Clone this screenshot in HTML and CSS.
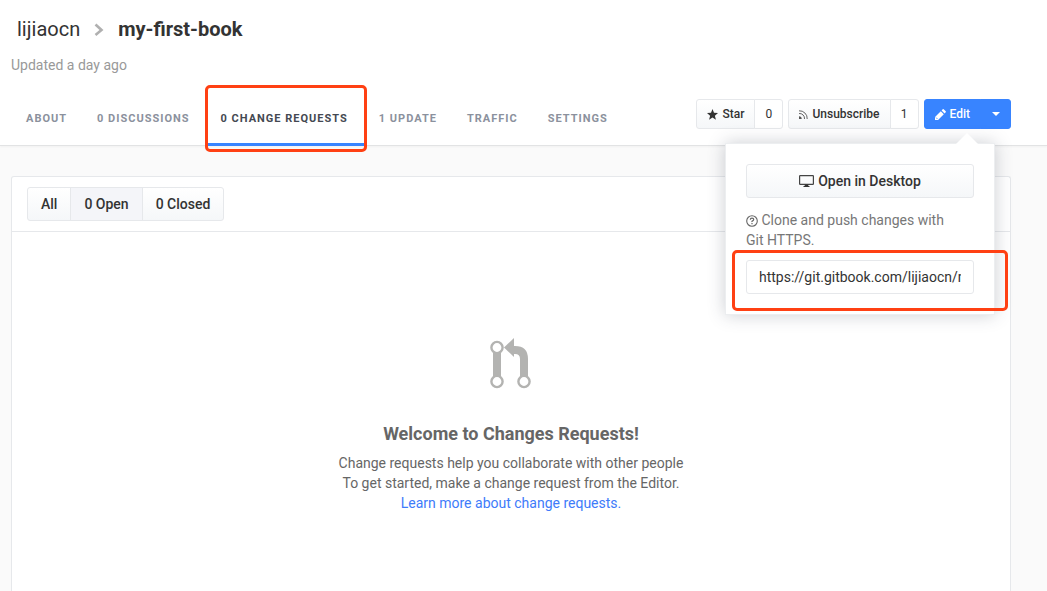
FILE: index.html
```html
<!DOCTYPE html>
<html lang="en">
<head>
<meta charset="utf-8">
<title>lijiaocn / my-first-book</title>
<link rel="stylesheet" href="styles.css">
</head>
<body>
<header class="header">
  <h1 class="title">
    <a class="owner" href="#">lijiaocn</a>
    <svg class="chevron" width="10" height="14" viewBox="0 0 10 14"><path d="M1.500 2.500 7.500 8l-6 5" fill="none" stroke="#b0b0b0" stroke-width="2.600"/></svg>
    <a class="book" href="#">my-first-book</a>
  </h1>
  <p class="updated">Updated a day ago</p>
  <div class="bar">
    <nav class="tabs">
      <a class="tab" href="#">ABOUT</a>
      <a class="tab" href="#">0 DISCUSSIONS</a>
      <a class="tab active" href="#">0 CHANGE REQUESTS<span class="mark mark-tab"></span></a>
      <a class="tab" href="#">1 UPDATE</a>
      <a class="tab" href="#">TRAFFIC</a>
      <a class="tab" href="#">SETTINGS</a>
    </nav>
    <div class="actions">
      <div class="group">
        <button class="btn small star"><svg width="11" height="11" viewBox="0 0 11 11"><path d="M5.500 0 7 3.800l4 .3-3.100 2.600 1 4L5.500 8.500 2.100 10.700l1-4L0 4.100l4-.3z" fill="#333"/></svg>Star</button>
        <button class="btn small count">0</button>
      </div>
      <div class="group">
        <button class="btn small"><svg width="9" height="9" viewBox="0 0 9 9"><g fill="none" stroke="#555" stroke-width=".9"><path d="M0 .8A7.700 7.700 0 0 1 8.200 9M0 3.500A5 5 0 0 1 5.500 9"/></g><path d="M0 9V6.300A2.700 2.700 0 0 1 2.700 9z" fill="#555"/></svg>Unsubscribe</button>
        <button class="btn small count">1</button>
      </div>
      <div class="group edit">
        <button class="btn small primary"><svg width="11" height="11" viewBox="0 0 11 11"><path d="M0 11V8l5.800-5.800 3 3L3 11zM6.600 1.400 7.700.3q.5-.5 1 0l2 2q.5.5 0 1L9.600 4.400z" fill="#fff"/><path d="M1 8.500 2.500 10" stroke="#3884ff" stroke-width=".8"/></svg>Edit</button>
        <button class="btn small primary caret" aria-label="More edit options"><svg width="8" height="4" viewBox="0 0 8 4"><path d="M0 0h8L4 4z" fill="#fff"/></svg></button>
        <div class="menu">
          <button class="btn desktop"><svg width="15" height="12" viewBox="0 0 15 12"><rect x=".6" y=".6" width="13.800" height="8.800" rx=".6" fill="none" stroke="#444" stroke-width="1.200"/><path d="M6 9.500h3l.5 1.500h1v1h-6v-1h1z" fill="#333"/></svg>Open in Desktop</button>
          <label class="clone" for="git-url"><svg width="12" height="12" viewBox="0 0 12 12"><circle cx="6" cy="6" r="5.300" fill="none" stroke="#666" stroke-width="1.100"/><path d="M4.300 4.700q0-1.600 1.700-1.600t1.700 1.500q0 .8-1 1.300T6 7" fill="none" stroke="#666" stroke-width="1.200"/><path d="M5.400 8h1.200v1.200H5.400z" fill="#666"/></svg> Clone and push changes with Git HTTPS.</label>
          <input class="url" id="git-url" type="text" readonly value="https://git.gitbook.com/lijiaocn/my-first-book.git">
          <span class="mark mark-url"></span>
        </div>
      </div>
    </div>
  </div>
</header>
<main class="content">
  <section class="panel">
    <div class="filters">
      <div class="group">
        <button class="btn">All</button>
        <button class="btn selected">0 Open</button>
        <button class="btn">0 Closed</button>
      </div>
    </div>
    <div class="empty">
      <svg class="pull" width="42" height="51" viewBox="0 0 42 51"><g fill="none" stroke="#b3b3b1"><path d="M7 15v24M34 39V21q0-9-9-9h-3" stroke-width="8"/><g stroke-width="2.400"><circle cx="7" cy="9.500" r="5.600" fill="#fff"/><circle cx="7" cy="43.500" r="5.600" fill="#fff"/><circle cx="34" cy="43.500" r="5.600" fill="#fff"/></g></g><path d="M14 9.500 24 0v19z" fill="#b3b3b1"/></svg>
      <h2 class="welcome">Welcome to Changes Requests!</h2>
      <p class="lead">Change requests help you collaborate with other people<br>To get started, make a change request from the Editor.<br><a class="learn" href="#">Learn more about change requests.</a></p>
    </div>
  </section>
</main>
</body>
</html>
```
FILE: styles.css
```css
* { box-sizing: border-box; }
body {
  margin: 0;
  min-height: 100vh;
  display: flex;
  flex-direction: column;
  background: #fafafa;
  color: #333;
  font: 14px/20px Roboto, "Liberation Sans", sans-serif;
}
a { color: inherit; text-decoration: none; }
h1, h2, p { margin: 0; }
.header {
  padding: 16px 36px 0 11px;
  background: #fff;
  border-bottom: 1px solid #e2e3e4;
  box-shadow: 0 1px 2px rgba(0, 0, 0, .04);
}
.title {
  display: flex;
  align-items: center;
  gap: 14px;
  padding-left: 6px;
  font-size: 20px;
  line-height: 26px;
  font-weight: 400;
}
.book { font-weight: 700; }
.updated { margin-top: 13px; color: #999; }
.bar { display: flex; justify-content: space-between; margin-top: 15px; }
.tabs { display: flex; margin-bottom: -1px; }
.tab {
  position: relative;
  padding: 4px 15px 0;
  border-bottom: 3px solid transparent;
  color: #8b919d;
  font-size: 11px;
  font-weight: 700;
  line-height: 49px;
  letter-spacing: 1px;
  white-space: nowrap;
}
.active { padding: 4px 16px 0; border-color: #3884ff; color: #444952; }
.mark {
  position: absolute;
  border: 3px solid #ff4013;
  border-radius: 5px;
  pointer-events: none;
}
.mark-tab { top: -5px; right: -3px; bottom: -9px; left: 0; }
.actions { display: flex; gap: 5px; align-self: flex-start; margin-top: 9px; }
.group { display: flex; }
.btn {
  display: flex;
  align-items: center;
  justify-content: center;
  gap: 4px;
  height: 34px;
  padding: 0 13px;
  border: 1px solid #e6e8eb;
  border-radius: 3px;
  background: linear-gradient(#fff, #f5f7f9);
  color: #333;
  font: 500 14px/20px Roboto, "Liberation Sans", sans-serif;
  white-space: nowrap;
}
.group .btn + .btn { margin-left: -1px; border-top-left-radius: 0; border-bottom-left-radius: 0; }
.group .btn:not(:last-of-type) { border-top-right-radius: 0; border-bottom-right-radius: 0; }
.small { height: 30px; padding: 0 10px; font-size: 12px; }
.count { width: 29px; padding: 0; background: #fff; font-weight: 400; }
.group .selected { background: #f4f5f9; }
.edit { position: relative; }
.primary { border-color: #3884ff; background: #3884ff; color: #fff; }
.caret { width: 31px; }
.menu {
  position: absolute;
  z-index: 2;
  top: 44px;
  right: 16px;
  width: 270px;
  padding: 20px;
  border: 1px solid #eceef0;
  background: #fff;
  box-shadow: 0 0 16px rgba(50, 60, 80, .25);
}
.menu::before {
  content: "";
  position: absolute;
  top: -11px;
  right: 16px;
  border: 11px solid transparent;
  border-top: 0;
  border-bottom-color: #fff;
}
.menu .desktop { width: 100%; border-radius: 3px; }
.clone { display: block; margin: 12px 0 10px; padding-right: 16px; color: #777; }
.clone svg { vertical-align: -2px; }
.url {
  display: block;
  width: 100%;
  height: 34px;
  padding: 0 12px;
  border: 1px solid #e6e8eb;
  border-radius: 3px;
  color: #333;
  font: 14px/20px Roboto, "Liberation Sans", sans-serif;
}
.mark-url { right: -14px; bottom: 3px; left: 6px; height: 61px; }
.content { flex: 1; display: flex; padding: 30px 36px 0 11px; }
.panel {
  flex: 1;
  border: 1px solid #e6e8eb;
  border-bottom: 0;
  border-radius: 3px 3px 0 0;
  background: #fff;
}
.filters { padding: 10px 15px; border-bottom: 1px solid #e6e8eb; }
.empty { padding: 106px 15px 70px; color: #666; text-align: center; }
.pull { display: block; margin: 0 auto; }
.welcome { margin-top: 33px; font-size: 18px; line-height: 24px; font-weight: 700; }
.lead { margin-top: 7px; }
.learn { color: #3e7bfa; }
```
